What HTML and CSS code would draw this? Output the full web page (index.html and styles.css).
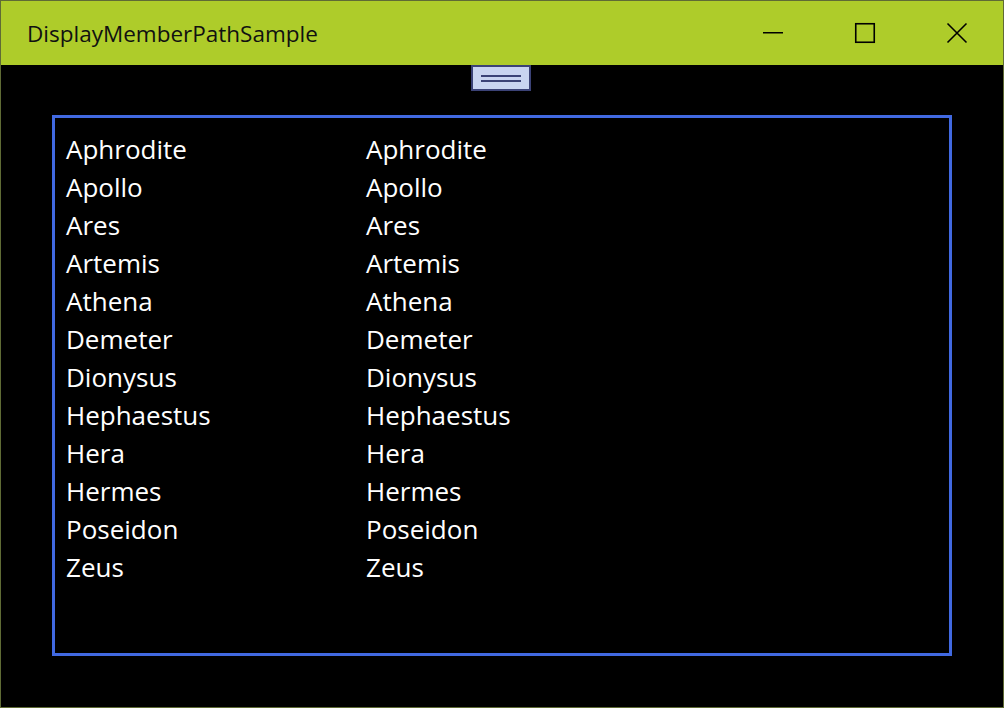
FILE: index.html
```html
<!DOCTYPE html>
<html>
<head>
<meta charset="utf-8">
<link rel="stylesheet" href="styles.css">
</head>
<body>
<div class="window">
  <div class="titlebar">
    <div class="title">DisplayMemberPathSample</div>
    <div class="controls">
      <div class="ctl">
        <svg width="22" height="22" viewBox="0 0 22 22"><rect x="1" y="10" width="20" height="1.5" fill="#000"/></svg>
      </div>
      <div class="ctl">
        <svg width="22" height="22" viewBox="0 0 22 22"><rect x="1.75" y="1.75" width="18.5" height="18.5" fill="none" stroke="#000" stroke-width="1.6"/></svg>
      </div>
      <div class="ctl">
        <svg width="22" height="22" viewBox="0 0 22 22"><path d="M1.5 1.5 L20.5 20.5 M20.5 1.5 L1.5 20.5" stroke="#000" stroke-width="1.6"/></svg>
      </div>
    </div>
  </div>
  <div class="content">
    <div class="grip"><span class="gline"></span><span class="gline"></span></div>
    <div class="listbox">
      <div class="col">
        <div class="item">Aphrodite</div>
        <div class="item">Apollo</div>
        <div class="item">Ares</div>
        <div class="item">Artemis</div>
        <div class="item">Athena</div>
        <div class="item">Demeter</div>
        <div class="item">Dionysus</div>
        <div class="item">Hephaestus</div>
        <div class="item">Hera</div>
        <div class="item">Hermes</div>
        <div class="item">Poseidon</div>
        <div class="item">Zeus</div>
      </div>
      <div class="col">
        <div class="item">Aphrodite</div>
        <div class="item">Apollo</div>
        <div class="item">Ares</div>
        <div class="item">Artemis</div>
        <div class="item">Athena</div>
        <div class="item">Demeter</div>
        <div class="item">Dionysus</div>
        <div class="item">Hephaestus</div>
        <div class="item">Hera</div>
        <div class="item">Hermes</div>
        <div class="item">Poseidon</div>
        <div class="item">Zeus</div>
      </div>
    </div>
  </div>
</div>
</body>
</html>
```
FILE: styles.css
```css
html, body {
  margin: 0;
  padding: 0;
  background: #000;
}
.window {
  width: 1004px;
  height: 708px;
  box-sizing: border-box;
  border: 1px solid #5f6b35;
  background: #000;
  display: flex;
  flex-direction: column;
  font-family: "Open Sans", "Noto Sans", sans-serif;
}
.titlebar {
  height: 64px;
  background: #aecc2a;
  display: flex;
  align-items: center;
  justify-content: space-between;
  flex-shrink: 0;
}
.title {
  padding-left: 26px;
  font-size: 22.5px;
  color: #111;
  padding-top: 1px;
}
.controls {
  display: flex;
  height: 100%;
}
.ctl {
  width: 92px;
  height: 100%;
  display: flex;
  align-items: center;
  justify-content: center;
}
.content {
  flex: 1;
  display: flex;
  flex-direction: column;
  align-items: center;
}
.grip {
  width: 60px;
  height: 26px;
  margin-left: -2px;
  box-sizing: border-box;
  border: 2px solid #3b4276;
  background: #c9d4f0;
  display: flex;
  flex-direction: column;
  align-items: center;
  justify-content: center;
  gap: 3px;
}
.gline {
  width: 40px;
  height: 2px;
  background: #3b4276;
}
.listbox {
  margin-top: 24px;
  width: 900px;
  height: 541px;
  box-sizing: border-box;
  border: 3px solid #4169e1;
  padding: 12px 0 0 11px;
  display: grid;
  grid-template-columns: 300px 1fr;
  align-content: start;
}
.item {
  color: #fff;
  font-size: 26px;
  line-height: 38px;
  height: 38px;
  white-space: nowrap;
}
```
